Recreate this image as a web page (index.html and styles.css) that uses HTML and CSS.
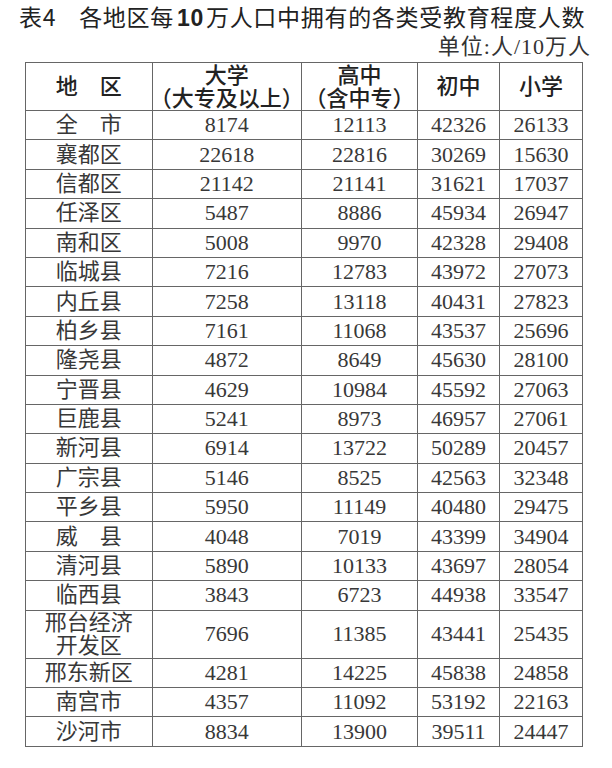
FILE: index.html
```html
<!DOCTYPE html>
<html lang="zh-CN">
<head>
<meta charset="utf-8">
<title>表4 各地区每10万人口中拥有的各类受教育程度人数</title>
<link rel="stylesheet" href="styles.css">
</head>
<body>
<div class="page">
  <h1 class="title"><span class="tno">表4</span>各地区每<span class="num">10</span>万人口中拥有的各类受教育程度人数</h1>
  <p class="unit">单位:人/10万人</p>
  <table class="data">
    <colgroup>
      <col class="c1"><col class="c2"><col class="c3"><col class="c4"><col class="c5">
    </colgroup>
    <thead>
      <tr class="head">
        <th>地　区</th>
        <th><span class="hl">大学</span><span class="hl">（大专及以上）</span></th>
        <th><span class="hl">高中</span><span class="hl">（含中专）</span></th>
        <th>初中</th>
        <th>小学</th>
      </tr>
    </thead>
    <tbody>
      <tr><td>全　市</td><td>8174</td><td>12113</td><td>42326</td><td>26133</td></tr>
      <tr><td>襄都区</td><td>22618</td><td>22816</td><td>30269</td><td>15630</td></tr>
      <tr><td>信都区</td><td>21142</td><td>21141</td><td>31621</td><td>17037</td></tr>
      <tr><td>任泽区</td><td>5487</td><td>8886</td><td>45934</td><td>26947</td></tr>
      <tr><td>南和区</td><td>5008</td><td>9970</td><td>42328</td><td>29408</td></tr>
      <tr><td>临城县</td><td>7216</td><td>12783</td><td>43972</td><td>27073</td></tr>
      <tr><td>内丘县</td><td>7258</td><td>13118</td><td>40431</td><td>27823</td></tr>
      <tr><td>柏乡县</td><td>7161</td><td>11068</td><td>43537</td><td>25696</td></tr>
      <tr><td>隆尧县</td><td>4872</td><td>8649</td><td>45630</td><td>28100</td></tr>
      <tr><td>宁晋县</td><td>4629</td><td>10984</td><td>45592</td><td>27063</td></tr>
      <tr><td>巨鹿县</td><td>5241</td><td>8973</td><td>46957</td><td>27061</td></tr>
      <tr><td>新河县</td><td>6914</td><td>13722</td><td>50289</td><td>20457</td></tr>
      <tr><td>广宗县</td><td>5146</td><td>8525</td><td>42563</td><td>32348</td></tr>
      <tr><td>平乡县</td><td>5950</td><td>11149</td><td>40480</td><td>29475</td></tr>
      <tr><td>威　县</td><td>4048</td><td>7019</td><td>43399</td><td>34904</td></tr>
      <tr><td>清河县</td><td>5890</td><td>10133</td><td>43697</td><td>28054</td></tr>
      <tr><td>临西县</td><td>3843</td><td>6723</td><td>44938</td><td>33547</td></tr>
      <tr class="tall"><td class="two">邢台经济<br>开发区</td><td>7696</td><td>11385</td><td>43441</td><td>25435</td></tr>
      <tr><td>邢东新区</td><td>4281</td><td>14225</td><td>45838</td><td>24858</td></tr>
      <tr><td>南宫市</td><td>4357</td><td>11092</td><td>53192</td><td>22163</td></tr>
      <tr><td>沙河市</td><td>8834</td><td>13900</td><td>39511</td><td>24447</td></tr>
    </tbody>
  </table>
</div>
</body>
</html>
```

FILE: styles.css
```css
html, body {
  margin: 0;
  padding: 0;
  background: #ffffff;
}

.page {
  width: 612px;
  height: 768px;
  overflow: hidden;
}

.title {
  margin: 0;
  height: 33px;
  overflow: hidden;
  padding-left: 19px;
  font-family: "Noto Sans CJK SC", sans-serif;
  font-size: 23px;
  font-weight: 400;
  letter-spacing: 0.7px;
  line-height: 33px;
  color: #222222;
  white-space: nowrap;
}

.title .tno {
  margin-right: 23px;
}

.title .num {
  font-family: "Liberation Sans", sans-serif;
  font-weight: 700;
  margin: 0 2px 0 3px;
}

.unit {
  margin: 0;
  height: 28px;
  overflow: hidden;
  padding-right: 21px;
  text-align: right;
  font-family: "Liberation Serif", "Noto Sans CJK SC", serif;
  font-size: 22px;
  font-weight: 400;
  letter-spacing: 1px;
  line-height: 28px;
  color: #333333;
}

.data {
  margin: 1px 0 0 25px;
  width: 557px;
  table-layout: fixed;
  border-collapse: collapse;
  border: 1px solid #666666;
  font-family: "Liberation Serif", "Noto Sans CJK SC", serif;
  font-size: 22px;
  color: #383838;
}

.c1 { width: 126.5px; }
.c2 { width: 149.5px; }
.c3 { width: 116px; }
.c4 { width: 82px; }
.c5 { width: 83px; }

.data th,
.data td {
  border: 1px solid #666666;
  padding: 0;
  text-align: center;
  vertical-align: middle;
  white-space: nowrap;
}

.data th {
  font-family: "Liberation Sans", "Noto Sans CJK SC", sans-serif;
  font-size: 22px;
  font-weight: 500;
  line-height: 23px;
  color: #222222;
  font-feature-settings: "halt";
}

.data th .hl {
  display: block;
  height: 23px;
  line-height: 23px;
  overflow: visible;
}

.head {
  height: 48px;
}

.data tbody tr {
  height: 29.4px;
}

.data td {
  line-height: 24px;
  font-weight: 400;
}

.data tbody tr.tall {
  height: 48px;
}

.data td.two {
  line-height: 23px;
}
```
